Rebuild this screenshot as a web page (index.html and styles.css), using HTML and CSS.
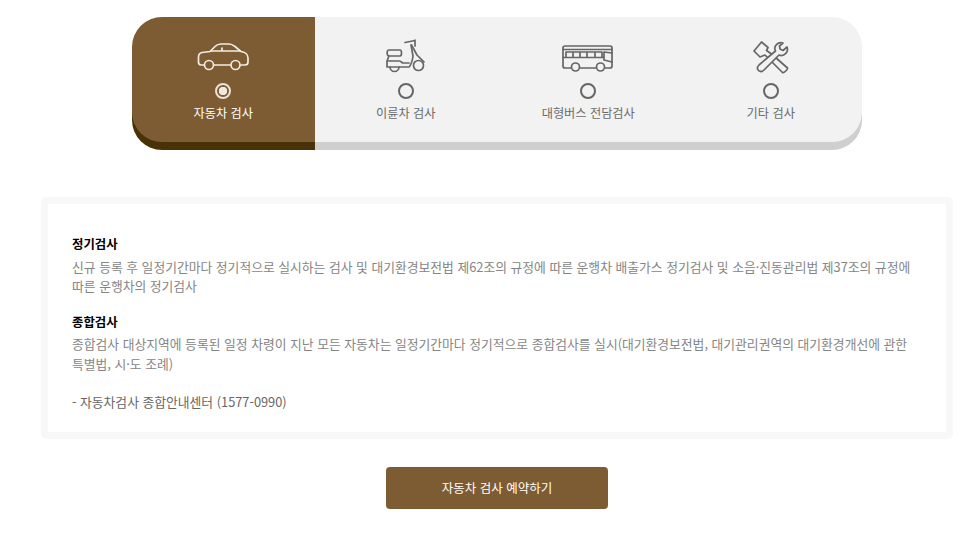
FILE: index.html
```html
<!DOCTYPE html>
<html lang="ko">
  <head>
    <meta charset="UTF-8" />
    <meta name="viewport" content="width=device-width, initial-scale=1.0" />
    <title>자동차 검사</title>
    <link rel="stylesheet" href="styles.css">
  </head>
  <body>
    <ul class="tabs">
      <li class="tab active">
        <svg class="icon" width="52" height="36" viewBox="0 0 52 36">
          <path d="M7 27H4C2 27 1.500 25.500 1.500 24V19C1.500 16.500 3 15 5 14.500L13 13.500L18 8.500C20 6.500 22 6 24 6H32C34 6 36 7 38 8.500L44 13.500C48 14 51 16.500 51 20V24C51 26 50 27 48 27H44M17 27H33"/>
          <path d="M14 13H43M25 10V13"/>
          <circle cx="12" cy="27" r="4.500"/>
          <circle cx="38.500" cy="27" r="4.500"/>
        </svg>
        <span class="radio"></span>
        <span class="tab-name">자동차 검사</span>
      </li>
      <li class="tab">
        <svg class="icon" width="42" height="36" viewBox="0 0 42 36">
          <path d="M4 12H15C17 12 17 18 15 18H4C1.500 18 1.500 12 4 12Z"/>
          <path d="M4 18L2 23V29H24C27 26 27.500 22 28 18L26 7M3 23H14C16 23 17 25 18 25H24"/>
          <path d="M26.500 7L32 17L39 24M20 4.500L30 2.500M30 2V8"/>
          <circle class="mask" cx="33.500" cy="27.500" r="5"/>
          <path d="M5 29A4.500 4.500 0 0 0 14 29"/>
        </svg>
        <span class="radio"></span>
        <span class="tab-name">이륜차 검사</span>
      </li>
      <li class="tab">
        <svg class="icon" width="52" height="36" viewBox="0 0 52 36">
          <rect x="1" y="8" width="49" height="22" rx="2"/>
          <path d="M1 11.500H50M4 14H40V19.500H4ZM11 14V19.500M18 14V19.500M25 14V19.500M33 14V19.500M1 19.500H41M42 14L50 15M42 14V22L50 24"/>
          <circle class="mask" cx="13.500" cy="29" r="4"/>
          <circle class="mask" cx="38.500" cy="29" r="4"/>
        </svg>
        <span class="radio"></span>
        <span class="tab-name">대형버스 전담검사</span>
      </li>
      <li class="tab">
        <svg class="icon" width="38" height="36" viewBox="0 0 38 36">
          <path d="M2 13L9.500 4L16 9.500L14.500 12.500L19.500 16L35.500 30C36 31 32 35.500 30.500 34.500L13 17L8 19Z"/>
          <path class="mask" d="M31 5C26 3.500 21 8 23.500 13L7 27C3 31 8 36 12 32L27 17C32 19 37 14 35 9L31 12.500L28 11L27.500 8Z"/>
        </svg>
        <span class="radio"></span>
        <span class="tab-name">기타 검사</span>
      </li>
    </ul>

    <div class="info">
      <h3>정기검사</h3>
      <p>신규 등록 후 일정기간마다 정기적으로 실시하는 검사 및 대기환경보전법 제62조의 규정에 따른 운행차 배출가스 정기검사 및 소음·진동관리법 제37조의 규정에 따른 운행차의 정기검사</p>
      <h3>종합검사</h3>
      <p>종합검사 대상지역에 등록된 일정 차령이 지난 모든 자동차는 일정기간마다 정기적으로 종합검사를 실시(대기환경보전법, 대기관리권역의 대기환경개선에 관한 특별법, 시·도 조례)</p>
      <p class="contact">- 자동차검사 종합안내센터 (1577-0990)</p>
    </div>

    <a href="#" class="reserve">자동차 검사 예약하기</a>
  </body>
</html>
```

FILE: styles.css
```css
* {
  margin: 0;
  padding: 0;
  box-sizing: border-box;
  font-family: "Noto Sans CJK KR", "Noto Sans", sans-serif;
}
body {
  background-color: #fff;
  color: #858585;
  font-size: 12.8px;
  height: 549px;
  overflow: hidden;
}
.tabs {
  display: flex;
  list-style: none;
  width: 730px;
  margin: 17px 0 0 132px;
}
.tab {
  flex: 1;
  height: 125px;
  display: flex;
  flex-direction: column;
  align-items: center;
  padding-top: 21px;
  background-color: #f2f2f2;
  box-shadow: 0 8px 0 #cfcfcf;
  color: #6b6b6b;
}
.tab:first-child {
  border-radius: 30px 0 0 30px;
}
.tab:last-child {
  border-radius: 0 30px 30px 0;
}
.tab.active {
  background-color: #7d5c33;
  box-shadow: 0 8px 0 #4a3208;
  color: #fff;
}
.icon {
  height: 36px;
  fill: none;
  stroke: #666;
  stroke-width: 1.7;
  stroke-linejoin: round;
  stroke-linecap: round;
}
.icon .mask {
  fill: #f2f2f2;
}
.active .icon {
  stroke: #f1ebe3;
}
.radio {
  width: 16px;
  height: 16px;
  margin-top: 9px;
  border: 2px solid #666;
  border-radius: 50%;
}
.active .radio {
  border-color: #e9e2d8;
  background: radial-gradient(circle, #efe9e0 0 4px, transparent 4.500px);
}
.tab-name {
  margin-top: 4px;
  font-size: 12.2px;
  line-height: 20px;
}
.info {
  width: 912px;
  height: 242px;
  margin: 55px 0 0 41px;
  padding: 31px 24px 0;
  background-color: #fff;
  border: 7px solid #f8f8f8;
  border-radius: 5px;
  line-height: 19.500px;
}
.info h3 {
  color: #000;
  font-size: 12.4px;
  font-weight: 700;
}
.info p {
  margin-top: 2px;
  margin-bottom: 17px;
}
.info .contact {
  color: #666;
  margin-top: 19px;
}
.reserve {
  display: block;
  width: 222px;
  height: 42px;
  margin: 28px 0 0 386px;
  background-color: #7d5c33;
  border-radius: 4px;
  color: #fff;
  font-size: 12.5px;
  line-height: 42px;
  text-align: center;
  text-decoration: none;
}
```
